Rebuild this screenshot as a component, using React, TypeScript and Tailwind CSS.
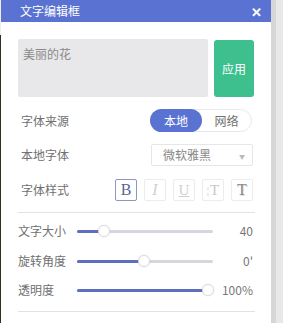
import React from "react";

const cjk = { fontFamily: '"Noto Sans CJK SC", "Noto Sans", sans-serif' };
const serif = { fontFamily: '"Liberation Serif", "DejaVu Serif", serif' };

function Slider({ label, pct, value }: { label: string; pct: number; value: string }) {
  return (
    <div className="flex items-center h-[20px]">
      <div className="w-[59px] text-[12px] text-[#707070] leading-none">{label}</div>
      <div className="relative w-[136px] h-[3px] rounded-full bg-[#d6d6de]">
        <div className="absolute left-0 top-0 h-[3px] rounded-full bg-[#5f6fbf]" style={{ width: `${pct}%` }} />
        <div
          className="absolute top-1/2 w-[12px] h-[12px] -translate-x-1/2 -translate-y-1/2 rounded-full bg-white border border-[#dcdcdc] shadow-[0_0_2px_rgba(0,0,0,0.1)]"
          style={{ left: `${pct}%` }}
        />
      </div>
      <div className="flex-1 text-right text-[12px] text-[#777] leading-none pr-[1px]">{value}</div>
    </div>
  );
}

export default function App() {
  return (
    <div className="w-[283px] h-[323px] flex bg-[#e6e6e6] overflow-hidden" style={cjk}>
      <div className="w-[1px] flex flex-col">
        <div className="h-[35px] bg-[#eee]" />
        <div className="flex-1 bg-[#2a3322]" />
      </div>
      <div className="w-[270px] h-full bg-white flex flex-col">
        <div className="h-[22px] bg-[#5a73d2] flex items-center justify-between pl-[19px] pr-[9px]">
          <span className="text-white text-[12px] leading-none">文字编辑框</span>
          <span className="text-white text-[13px] leading-none font-bold">✕</span>
        </div>
        <div className="px-[17px] flex flex-col">
          <div className="flex mt-[17px] gap-[6px]">
            <div className="w-[190px] h-[58px] bg-[#e8e8ea] rounded-[2px] px-[5px] pt-[9px] text-[12px] text-[#888] leading-none">
              美丽的花
            </div>
            <div className="w-[40px] h-[57px] mt-[1px] bg-[#3ec08e] rounded-[3px] flex items-center justify-center text-white text-[12px]">
              应用
            </div>
          </div>

          <div className="flex items-center justify-between mt-[12px] h-[23px]">
            <span className="pl-[3px] text-[12px] text-[#707070] leading-none">字体来源</span>
            <div className="flex w-[102px] h-[23px] rounded-full border border-[#e8e8ee] mr-[2px]">
              <div className="w-[52px] -my-[1px] -ml-[1px] h-[23px] rounded-full bg-[#5a73d2] text-white text-[12px] flex items-center justify-center">
                本地
              </div>
              <div className="flex-1 flex items-center justify-center text-[12px] text-[#707070]">网络</div>
            </div>
          </div>

          <div className="flex items-center justify-between mt-[12px] h-[22px]">
            <span className="pl-[3px] text-[12px] text-[#707070] leading-none">本地字体</span>
            <div className="relative w-[102px] h-[22px] border border-[#e6e6e6] rounded-[2px] flex items-center pl-[11px] mr-[1px] text-[12px] text-[#888]">
              微软雅黑
              <span className="absolute right-[7px] top-[7px] text-[6px] text-[#bbb]">▼</span>
            </div>
          </div>

          <div className="flex items-center justify-between mt-[13px] h-[22px]">
            <span className="pl-[3px] text-[12px] text-[#707070] leading-none">字体样式</span>
            <div className="flex gap-[7px] mr-[1px]">
              <div className="w-[22px] h-[22px] border border-[#8d97c6] rounded-[2px] flex items-center justify-center text-[16px] text-[#5b6597]" style={serif}>
                B
              </div>
              <div className="w-[22px] h-[22px] border border-[#ececec] rounded-[2px] flex items-center justify-center text-[16px] italic text-[#d0d0d0]" style={serif}>
                I
              </div>
              <div className="w-[22px] h-[22px] border border-[#ececec] rounded-[2px] flex items-center justify-center text-[15px] underline text-[#d0d0d0]" style={serif}>
                U
              </div>
              <div className="w-[22px] h-[22px] border border-[#ececec] rounded-[2px] flex items-center justify-center text-[15px] text-[#c8c8c8]" style={serif}>
                <span className="text-[11px] mr-[1px]">¦</span>T
              </div>
              <div className="w-[22px] h-[22px] border border-[#ececec] rounded-[2px] flex items-center justify-center text-[16px] text-[#8a8a8a] [text-shadow:1px_1px_0_#ddd]" style={serif}>
                T
              </div>
            </div>
          </div>

          <div className="mt-[11px] h-[1px] bg-[#e2e2e2] mr-[-1px]" />

          <div className="mt-[8px] flex flex-col gap-[10px]">
            <Slider label="文字大小" pct={20} value="40" />
            <Slider label="旋转角度" pct={49} value="0'" />
            <div className="-mt-[1px]">
              <Slider label="透明度" pct={96} value="100%" />
            </div>
          </div>

          <div className="mt-[11px] h-[1px] bg-[#e2e2e2] mr-[-1px]" />
        </div>
      </div>
      <div className="w-[5px] bg-[#d6d6d6]" />
      <div className="flex-1 bg-[#e8e8e8]" />
    </div>
  );
}
